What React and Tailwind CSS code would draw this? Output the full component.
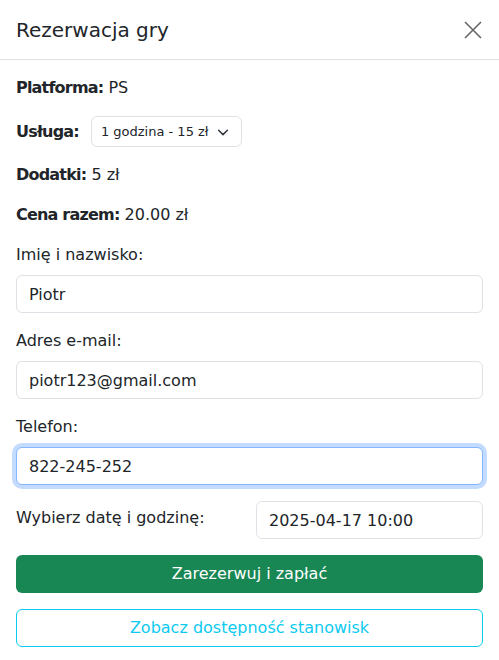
import React from "react";

const font = { fontFamily: '"DejaVu Sans", "Open Sans", sans-serif' };

function Field({ label, value, focused }) {
  return (
    <div className="mb-4">
      <label className="mb-2 block text-[16px] leading-6 text-[#212529]">{label}</label>
      <input
        readOnly
        autoFocus={focused}
        defaultValue={value}
        className={
          "block h-[38px] w-full rounded-[6px] border bg-white px-3 text-[16px] text-[#212529] outline-none " +
          (focused
            ? "border-[#86b7fe] shadow-[0_0_0_4px_rgba(13,110,253,0.25)]"
            : "border-[#dee2e6]")
        }
      />
    </div>
  );
}

export default function App() {
  return (
    <div className="min-h-[660px] w-[499px] bg-white text-[#212529]" style={font}>
      <div className="flex h-[60px] items-center justify-between border-b border-[#dee2e6] pl-4 pr-[14px]">
        <h5 className="text-[20px] font-medium leading-[1.2]">Rezerwacja gry</h5>
        <button className="flex h-6 w-6 items-center justify-center opacity-60">
          <svg width="18" height="18" viewBox="0 0 18 18">
            <path d="M1 1 L17 17 M17 1 L1 17" stroke="#000" strokeWidth="1.6" fill="none" />
          </svg>
        </button>
      </div>
      <div className="p-4">
        <p className="mb-4 text-[16px] leading-6">
          <strong className="font-bold tracking-[-0.05em]">Platforma:</strong> PS
        </p>
        <div className="mb-4 flex items-center gap-3">
          <strong className="text-[16px] font-bold leading-6 tracking-[-0.05em]">Usługa:</strong>
          <div className="flex h-[31px] w-[151px] items-center justify-between rounded-[6px] border border-[#dee2e6] pl-[9px] pr-[11px] text-[13px]">
            <span>1 godzina - 15 zł</span>
            <svg width="14" height="14" viewBox="0 0 16 16">
              <path d="M3 6 L8 11 L13 6" stroke="#343a40" strokeWidth="1.8" fill="none" strokeLinecap="round" strokeLinejoin="round" />
            </svg>
          </div>
        </div>
        <p className="mb-4 text-[16px] leading-6">
          <strong className="font-bold tracking-[-0.05em]">Dodatki:</strong> 5 zł
        </p>
        <p className="mb-4 text-[16px] leading-6">
          <strong className="font-bold tracking-[-0.05em]">Cena razem:</strong> 20.00 zł
        </p>
        <Field label="Imię i nazwisko:" value="Piotr" />
        <Field label="Adres e-mail:" value="piotr123@gmail.com" />
        <Field label="Telefon:" value="822-245-252" focused />
        <div className="mb-4 flex items-center justify-between">
          <label className="-mt-1 text-[16px] leading-6">Wybierz datę i godzinę:</label>
          <input
            readOnly
            defaultValue="2025-04-17 10:00"
            className="block h-[38px] w-[227px] rounded-[6px] border border-[#dee2e6] bg-white px-3 text-[16px] text-[#212529] outline-none"
          />
        </div>
        <button className="mb-4 block h-[38px] w-full rounded-[6px] bg-[#198754] text-[16px] text-white">
          Zarezerwuj i zapłać
        </button>
        <button className="block h-[38px] w-full rounded-[6px] border border-[#0dcaf0] bg-white text-[16px] text-[#0dcaf0]">
          Zobacz dostępność stanowisk
        </button>
      </div>
    </div>
  );
}
